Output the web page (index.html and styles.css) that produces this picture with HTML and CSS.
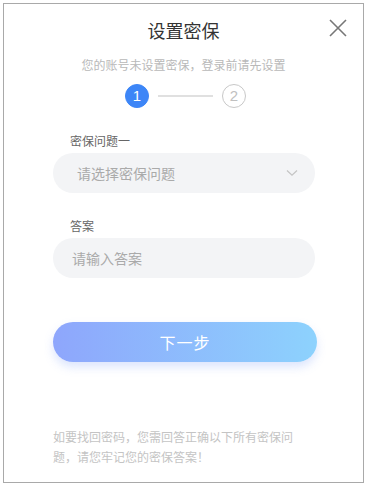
FILE: index.html
```html
<!doctype html>
<html lang="zh">
<head>
	<meta charset="UTF-8">
	<title>设置密保</title>
	<link rel="stylesheet" href="styles.css">
</head>
<body>
	<div class="dialog">
		<div class="head">
			<h1 class="title">设置密保</h1>
			<svg class="close" width="18" height="18" viewBox="0 0 18 18"><path d="M1 1L17 17M17 1L1 17" stroke="#777" stroke-width="1.6" fill="none"/></svg>
		</div>
		<p class="tip">您的账号未设置密保，登录前请先设置</p>
		<div class="steps">
			<span class="dot on">1</span>
			<span class="line"></span>
			<span class="dot">2</span>
		</div>
		<div class="form">
			<div class="label">密保问题一</div>
			<div class="field select">
				<span>请选择密保问题</span>
				<svg width="12" height="8" viewBox="0 0 12 8"><path d="M1 1.5L6 6.2L11 1.5" stroke="#c4c4c4" stroke-width="1.2" fill="none"/></svg>
			</div>
			<div class="label second">答案</div>
			<div class="field input"><span>请输入答案</span></div>
			<div class="btn">下一步</div>
			<p class="note">如要找回密码，您需回答正确以下所有密保问题，请您牢记您的密保答案！</p>
		</div>
	</div>
</body>
</html>
```

FILE: styles.css
```css
body,html{margin: 0;padding: 0;background: #fff;}
body{font-family: "Noto Sans CJK SC", "Noto Sans", sans-serif;}
.dialog{margin: 3px;width: 359px;height: 478px;border: 1px solid #a9a9a9;box-sizing: content-box;}
.head{position: relative;height: 52px;display: flex;justify-content: center;align-items: center;}
.title{margin: 0;font-size: 18px;font-weight: normal;color: #333;line-height: 24px;}
.close{position: absolute;right: 16px;top: 15px;}
.tip{margin: 1px 0 0;text-align: center;font-size: 12px;color: #b9b9b9;line-height: 16px;}
.steps{display: flex;justify-content: center;align-items: center;margin-top: 11px;padding-left: 4px;}
.dot{width: 22px;height: 22px;border-radius: 50%;border: 1px solid #c8c8c8;color: #c0c0c0;font-family: "Liberation Sans", sans-serif;font-size: 15px;line-height: 22px;text-align: center;}
.dot.on{background: #3d86f7;border-color: #3d86f7;color: #fff;}
.line{width: 55px;height: 2px;background: #e0e0e0;margin: 0 9px;}
.form{padding: 25px 0 0 49px;}
.label{font-size: 12px;color: #666;line-height: 16px;padding-left: 17px;}
.label.second{margin-top: 25px;}
.field{margin-top: 4px;width: 262px;height: 40px;border-radius: 20px;background: #f3f4f6;display: flex;align-items: center;justify-content: space-between;box-sizing: border-box;font-size: 14px;color: #aaa;}
.select{padding: 0 17px 0 24px;}
.input{padding: 0 19px;}
.btn{margin-top: 44px;width: 264px;height: 40px;border-radius: 20px;background: linear-gradient(90deg, #8ea6fc, #8dd2fd);color: #fff;font-size: 16px;line-height: 40px;text-align: center;letter-spacing: 1px;box-shadow: 0 5px 10px rgba(140, 170, 250, 0.3);}
.note{margin: 65px 0 0;width: 248px;font-size: 12px;line-height: 20px;color: #c4c4c4;}
```
